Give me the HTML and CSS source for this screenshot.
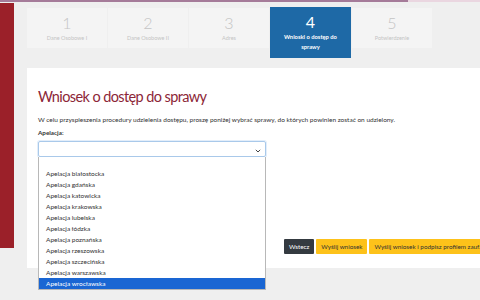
FILE: index.html
```html
<!DOCTYPE html>
<html lang="pl">
<head>
<meta charset="utf-8">
<title>Wniosek o dostęp do sprawy</title>
<link rel="stylesheet" href="styles.css">
</head>
<body>
<div class="topline"></div>
<div class="page">
  <div class="sidebar"></div>
  <div class="main">
    <div class="steps">
      <div class="step"><span class="num">1</span><span class="label">Dane Osobowe I</span></div>
      <div class="step"><span class="num">2</span><span class="label">Dane Osobowe II</span></div>
      <div class="step"><span class="num">3</span><span class="label">Adres</span></div>
      <div class="step active"><span class="num">4</span><span class="label">Wnioski o dostęp do sprawy</span></div>
      <div class="step"><span class="num">5</span><span class="label">Potwierdzenie</span></div>
    </div>
    <div class="card">
      <h1 class="title">Wniosek o dostęp do sprawy</h1>
      <p class="intro">W celu przyspieszenia procedury udzielenia dostępu, proszę poniżej wybrać sprawy, do których powinien zostać on udzielony.</p>
      <div class="field">
        <div class="field-label">Apelacja:</div>
        <div class="select">
          <span class="chevron"><svg width="6" height="4" viewBox="0 0 6 4"><path d="M0.8 0.8 L3 3 L5.2 0.8" fill="none" stroke="#444" stroke-width="1"/></svg></span>
          <ul class="options">
            <li>&nbsp;</li>
            <li>Apelacja białostocka</li>
            <li>Apelacja gdańska</li>
            <li>Apelacja katowicka</li>
            <li>Apelacja krakowska</li>
            <li>Apelacja lubelska</li>
            <li>Apelacja łódzka</li>
            <li>Apelacja poznańska</li>
            <li>Apelacja rzeszowska</li>
            <li>Apelacja szczecińska</li>
            <li>Apelacja warszawska</li>
            <li class="selected">Apelacja wrocławska</li>
          </ul>
        </div>
      </div>
      <div class="buttons">
        <span class="btn dark">Wstecz</span>
        <span class="btn yellow">Wyślij wniosek</span>
        <span class="btn yellow">Wyślij wniosek i podpisz profilem zaufanym</span>
      </div>
    </div>
  </div>
</div>
</body>
</html>
```

FILE: styles.css
```css
html, body
{
	margin:0;
	padding:0;
	overflow:hidden;
}
body
{
	background:#efefef;
	font-family:Lato, "Open Sans", Arial, sans-serif;
	color:#333;
	width:480px;
	height:300px;
}
.topline
{
	height:2px;
	background:linear-gradient(to right, #a57b99 0, #a57b99 408px, #ead6e0 408px);
}
.page
{
	display:flex;
	align-items:flex-start;
	padding-top:1px;
}
.sidebar
{
	width:14px;
	height:245px;
	flex:none;
	background:#9b2029;
}
.main
{
	flex:1;
	padding-left:13px;
	min-width:0;
}
.steps
{
	display:flex;
	align-items:flex-start;
	gap:1px;
	height:65px;
	padding-top:5px;
	box-sizing:border-box;
}
.step
{
	width:80px;
	height:40px;
	background:#f4f4f4;
	display:flex;
	flex-direction:column;
	align-items:center;
	text-align:center;
	color:#c4c4c4;
}
.step .num
{
	font-size:16px;
	font-weight:300;
	line-height:16px;
	margin-top:7px;
}
.step .label
{
	font-size:5.5px;
	line-height:9px;
	margin-top:3px;
}
.step.active
{
	width:81px;
	height:51px;
	margin-top:-1px;
	background:#1e69a6;
	color:#fff;
}
.step.active .num
{
	margin-top:7px;
	font-weight:400;
}
.step.active .label
{
	font-weight:700;
	font-size:5.8px;
	line-height:10px;
	width:60px;
	margin-top:2px;
}
.card
{
	background:#fff;
	height:200px;
	box-sizing:border-box;
	padding:18px 0 0 11px;
}
.title
{
	margin:0;
	font-size:14.5px;
	font-weight:400;
	letter-spacing:-0.6px;
	line-height:22px;
	color:#8c2637;
}
.intro
{
	margin:7px 0 0;
	font-size:6.5px;
	line-height:10px;
	color:#333;
}
.field
{
	margin-top:3px;
}
.field-label
{
	font-size:6.3px;
	font-weight:700;
	line-height:10px;
	color:#333;
}
.select
{
	position:relative;
	margin-top:3px;
	width:228px;
	height:16px;
	box-sizing:border-box;
	border:1px solid #a9c9ea;
	border-radius:2px;
	box-shadow:0 0 0 1px #e3eefa;
}
.chevron
{
	position:absolute;
	right:4px;
	top:5px;
	line-height:0;
}
.options
{
	position:absolute;
	left:-1px;
	top:15px;
	width:228px;
	margin:0;
	padding:0;
	list-style:none;
	background:#fff;
	border:1px solid #b8b8b8;
	border-top:none;
	box-sizing:border-box;
	z-index:2;
}
.options li
{
	height:11px;
	line-height:11px;
	font-size:6.5px;
	padding-left:7px;
	color:#333;
}
.options li.selected
{
	background:#1a66d3;
	color:#fff;
}
.buttons
{
	display:flex;
	gap:2px;
	margin-top:82px;
	padding-left:246px;
	white-space:nowrap;
}
.btn
{
	display:inline-block;
	height:15px;
	line-height:15px;
	padding:0 5px;
	font-size:6.3px;
	border-radius:1px;
}
.btn.dark
{
	background:#343a40;
	color:#fff;
}
.btn.yellow
{
	background:#fdc21a;
	color:#333;
}
```
